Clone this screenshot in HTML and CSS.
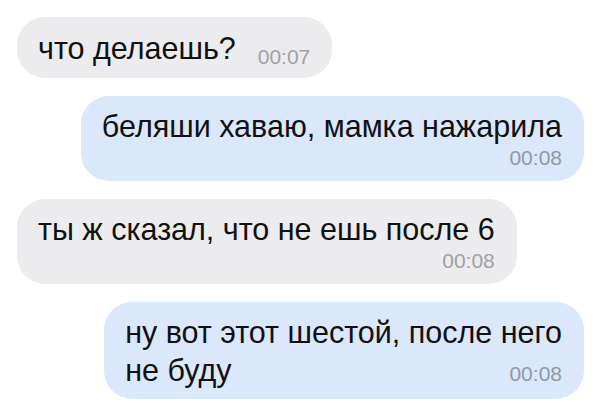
FILE: index.html
```html
<!DOCTYPE html>
<html lang="ru">
<head>
    <meta charset="UTF-8">
    <meta name="viewport" content="width=device-width, initial-scale=1.0">
    <title>Чат</title>
    <link rel="stylesheet" href="styles.css">
</head>
<body>

    <div class="chat">
        <!-- входящее -->
        <div class="msg in short">
            <span class="text">что делаешь?</span>
            <span class="time">00:07</span>
        </div>

        <!-- исходящее -->
        <div class="msg out">
            <div class="text">беляши хаваю, мамка нажарила</div>
            <div class="time">00:08</div>
        </div>

        <div class="msg in">
            <div class="text">ты ж сказал, что не ешь после 6</div>
            <div class="time">00:08</div>
        </div>

        <div class="msg out">
            <div class="text">ну вот этот шестой, после него</div>
            <div class="last-line">
                <span class="text">не буду</span>
                <span class="time">00:08</span>
            </div>
        </div>
    </div>

</body>
</html>
```

FILE: styles.css
```css
body {
    margin: 0;
    background: #ffffff;
    font-family: "Liberation Sans", Arial, sans-serif;
    color: #111111;
}
.chat {
    display: flex;
    flex-direction: column;
    gap: 18px;
    padding: 17px 20px 0 17px;
}
.msg {
    border-radius: 28px;
    padding: 11px 22px 10px 21px;
    max-width: 520px;
}
.msg.in {
    align-self: flex-start;
    background: #ececef;
}
.msg.out {
    align-self: flex-end;
    background: #dbe7fb;
}
.text {
    font-size: 30.5px;
    line-height: 38px;
}
.time {
    font-size: 21px;
    color: #a0a1a5;
    text-align: right;
    line-height: 26px;
}
.msg.out .time {
    color: #8f99a8;
}
.short {
    display: flex;
    align-items: baseline;
    gap: 22px;
    padding-top: 12px;
    padding-bottom: 11px;
}
.short .time {
    position: relative;
    top: 5px;
}
.last-line {
    display: flex;
    justify-content: space-between;
    align-items: baseline;
}
```
